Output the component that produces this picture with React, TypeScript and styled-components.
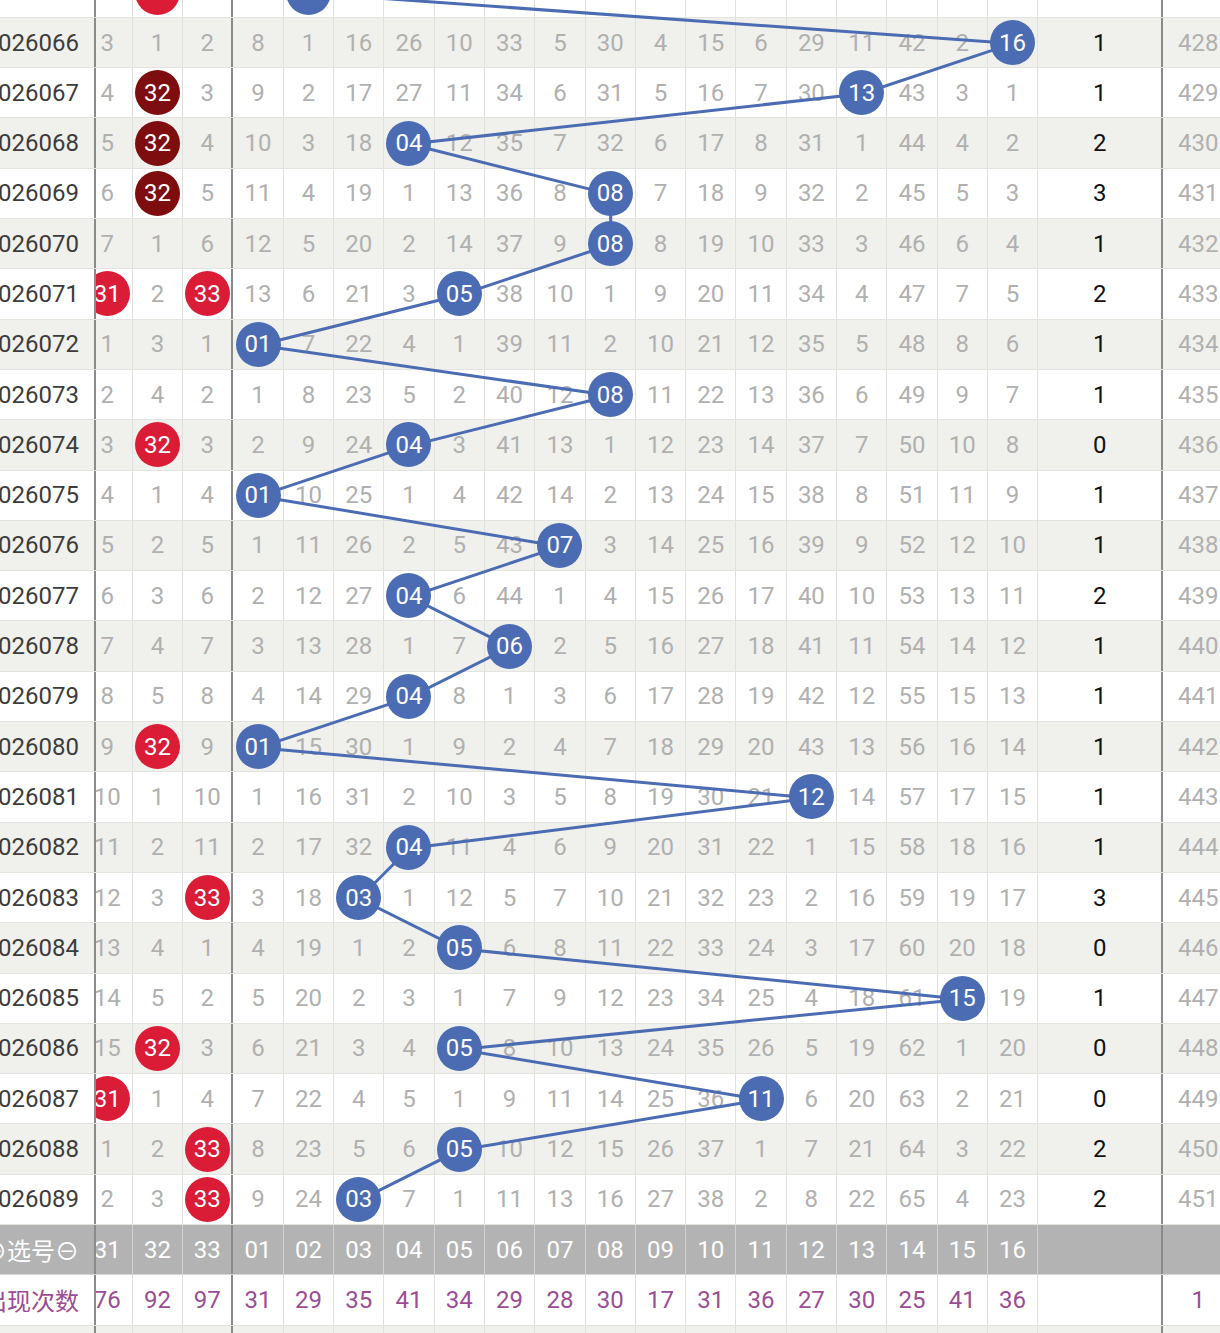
import React from "react";
import styled, { createGlobalStyle } from "styled-components";

const CELL = 50.3;
const ROW = 50.3;
const ISSUE_W = 96;
const OVERLAP = 13.45;

const LABELS = [
  "31", "32", "33",
  "01", "02", "03", "04", "05", "06", "07", "08",
  "09", "10", "11", "12", "13", "14", "15", "16"
];

// "*" = ball of that column, "#" = dark red ball
const ROWS: [string, string, string, string][] = [
  ["2026065", "2 * 1 7 * 15 25 9 32 4 29 3 14 5 28 10 41 1 17", "3", "427"],
  ["2026066", "3 1 2 8 1 16 26 10 33 5 30 4 15 6 29 11 42 2 *", "1", "428"],
  ["2026067", "4 # 3 9 2 17 27 11 34 6 31 5 16 7 30 * 43 3 1", "1", "429"],
  ["2026068", "5 # 4 10 3 18 * 12 35 7 32 6 17 8 31 1 44 4 2", "2", "430"],
  ["2026069", "6 # 5 11 4 19 1 13 36 8 * 7 18 9 32 2 45 5 3", "3", "431"],
  ["2026070", "7 1 6 12 5 20 2 14 37 9 * 8 19 10 33 3 46 6 4", "1", "432"],
  ["2026071", "* 2 * 13 6 21 3 * 38 10 1 9 20 11 34 4 47 7 5", "2", "433"],
  ["2026072", "1 3 1 * 7 22 4 1 39 11 2 10 21 12 35 5 48 8 6", "1", "434"],
  ["2026073", "2 4 2 1 8 23 5 2 40 12 * 11 22 13 36 6 49 9 7", "1", "435"],
  ["2026074", "3 * 3 2 9 24 * 3 41 13 1 12 23 14 37 7 50 10 8", "0", "436"],
  ["2026075", "4 1 4 * 10 25 1 4 42 14 2 13 24 15 38 8 51 11 9", "1", "437"],
  ["2026076", "5 2 5 1 11 26 2 5 43 * 3 14 25 16 39 9 52 12 10", "1", "438"],
  ["2026077", "6 3 6 2 12 27 * 6 44 1 4 15 26 17 40 10 53 13 11", "2", "439"],
  ["2026078", "7 4 7 3 13 28 1 7 * 2 5 16 27 18 41 11 54 14 12", "1", "440"],
  ["2026079", "8 5 8 4 14 29 * 8 1 3 6 17 28 19 42 12 55 15 13", "1", "441"],
  ["2026080", "9 * 9 * 15 30 1 9 2 4 7 18 29 20 43 13 56 16 14", "1", "442"],
  ["2026081", "10 1 10 1 16 31 2 10 3 5 8 19 30 21 * 14 57 17 15", "1", "443"],
  ["2026082", "11 2 11 2 17 32 * 11 4 6 9 20 31 22 1 15 58 18 16", "1", "444"],
  ["2026083", "12 3 * 3 18 * 1 12 5 7 10 21 32 23 2 16 59 19 17", "3", "445"],
  ["2026084", "13 4 1 4 19 1 2 * 6 8 11 22 33 24 3 17 60 20 18", "0", "446"],
  ["2026085", "14 5 2 5 20 2 3 1 7 9 12 23 34 25 4 18 61 * 19", "1", "447"],
  ["2026086", "15 * 3 6 21 3 4 * 8 10 13 24 35 26 5 19 62 1 20", "0", "448"],
  ["2026087", "* 1 4 7 22 4 5 1 9 11 14 25 36 * 6 20 63 2 21", "0", "449"],
  ["2026088", "1 2 * 8 23 5 6 * 10 12 15 26 37 1 7 21 64 3 22", "2", "450"],
  ["2026089", "2 3 * 9 24 * 7 1 11 13 16 27 38 2 8 22 65 4 23", "2", "451"]
];

const COUNTS = ["76", "92", "97", "31", "29", "35", "41", "34", "29", "28", "30", "17", "31", "36", "27", "30", "25", "41", "36"];

type Tone = "plain" | "shade" | "head";

const GlobalStyle = createGlobalStyle`
  html, body {
    margin: 0;
    padding: 0;
    background: #ffffff;
    overflow: hidden;
  }
  body {
    font-family: Roboto, "Noto Sans", "Noto Sans CJK SC", sans-serif;
  }
`;

const Page = styled.div`
  width: 1220px;
  height: 1333px;
  overflow: hidden;
`;

const Table = styled.div`
  margin-top: -32.45px;
  width: 1260px;
`;

const Body = styled.div`
  position: relative;
`;

const Row = styled.div<{ $tone: Tone }>`
  display: flex;
  height: ${ROW}px;
  box-sizing: border-box;
  border-bottom: 1px solid ${(p) => (p.$tone === "head" ? "#d6d6d6" : "#e3e3df")};
  background: ${(p) =>
    p.$tone === "head" ? "#b3b3b3" : p.$tone === "shade" ? "#f0f0ec" : "#ffffff"};
`;

const IssueCell = styled.div<{ $color: string }>`
  position: relative;
  z-index: 3;
  flex: 0 0 ${ISSUE_W}px;
  box-sizing: border-box;
  border-right: 2px solid #8a8a8a;
  background: inherit;
  display: flex;
  align-items: center;
  justify-content: flex-end;
  padding-right: 15px;
  overflow: hidden;
  white-space: nowrap;
  font-size: 24px;
  color: ${(p) => p.$color};
`;

const Cells = styled.div`
  display: flex;
  margin-left: -${OVERLAP}px;
`;

const Cell = styled.div<{ $edge?: boolean; $color: string; $line: string }>`
  flex: 0 0 ${CELL}px;
  box-sizing: border-box;
  border-right: ${(p) => (p.$edge ? "2px solid #8a8a8a" : `1px solid ${p.$line}`)};
  display: flex;
  align-items: center;
  justify-content: center;
  font-size: 24px;
  color: ${(p) => p.$color};
`;

const SumCell = styled.div<{ $line?: boolean }>`
  flex: 0 0 125px;
  box-sizing: border-box;
  border-right: 2px solid #8a8a8a;
  display: flex;
  align-items: center;
  justify-content: center;
  font-size: 24px;
  color: #111111;
`;

const LastCell = styled.div<{ $color: string }>`
  flex: 0 0 70px;
  box-sizing: border-box;
  display: flex;
  align-items: center;
  justify-content: center;
  font-size: 24px;
  color: ${(p) => p.$color};
`;

const BALL_BG: Record<string, string> = {
  red: "#da1c37",
  dark: "#7e0d10",
  blue: "#4b6cb3"
};

const Ball = styled.span<{ $kind: "red" | "dark" | "blue" }>`
  position: relative;
  z-index: 2;
  width: 45px;
  height: 45px;
  border-radius: 50%;
  display: flex;
  align-items: center;
  justify-content: center;
  background: ${(p) => BALL_BG[p.$kind]};
  color: #ffffff;
  font-size: 24px;
`;

const TrendLine = styled.svg`
  position: absolute;
  left: 0;
  top: 0;
  z-index: 1;
  pointer-events: none;
`;

const colCenter = (i: number) => ISSUE_W - OVERLAP + i * CELL + CELL / 2;

export default function App() {
  const parsed = ROWS.map(([issue, cells, sum, last]) => ({
    issue,
    cells: cells.split(" "),
    sum,
    last
  }));

  const points = parsed
    .map((r, ri) => {
      const idx = r.cells.findIndex((v, i) => i >= 3 && v === "*");
      return `${colCenter(idx).toFixed(2)},${(ri * ROW + ROW / 2).toFixed(2)}`;
    })
    .join(" ");

  const bodyH = parsed.length * ROW;

  return (
    <Page>
      <GlobalStyle />
      <Table>
        <Body>
          <TrendLine width={1220} height={bodyH} viewBox={`0 0 1220 ${bodyH}`}>
            <polyline points={points} fill="none" stroke="#4b6cb3" strokeWidth={3} />
          </TrendLine>
          {parsed.map((r, ri) => (
            <Row key={r.issue} $tone={ri % 2 === 1 ? "shade" : "plain"}>
              <IssueCell $color="#3c3c3c">{r.issue}</IssueCell>
              <Cells>
                {r.cells.map((v, i) => (
                  <Cell key={i} $edge={i === 2} $color="#b0b0b0" $line="#e0e0dc">
                    {v === "*" || v === "#" ? (
                      <Ball $kind={v === "#" ? "dark" : i < 3 ? "red" : "blue"}>{LABELS[i]}</Ball>
                    ) : (
                      v
                    )}
                  </Cell>
                ))}
                <SumCell>{r.sum}</SumCell>
                <LastCell $color="#b0b0b0">{r.last}</LastCell>
              </Cells>
            </Row>
          ))}
        </Body>
        <Row $tone="head">
          <IssueCell $color="#ffffff">⊕选号⊖</IssueCell>
          <Cells>
            {LABELS.map((l, i) => (
              <Cell key={l} $edge={i === 2} $color="#ffffff" $line="#d2d2d2">
                {l}
              </Cell>
            ))}
            <SumCell />
            <LastCell $color="#ffffff" />
          </Cells>
        </Row>
        <Row $tone="plain">
          <IssueCell $color="#9a4d95">出现次数</IssueCell>
          <Cells>
            {COUNTS.map((c, i) => (
              <Cell key={i} $edge={i === 2} $color="#9a4d95" $line="#e0e0dc">
                {c}
              </Cell>
            ))}
            <SumCell />
            <LastCell $color="#9a4d95">1</LastCell>
          </Cells>
        </Row>
        <Row $tone="shade">
          <IssueCell $color="#3c3c3c" />
          <Cells>
            {LABELS.map((l, i) => (
              <Cell key={l} $edge={i === 2} $color="#b0b0b0" $line="#e0e0dc" />
            ))}
            <SumCell />
            <LastCell $color="#b0b0b0" />
          </Cells>
        </Row>
      </Table>
    </Page>
  );
}
